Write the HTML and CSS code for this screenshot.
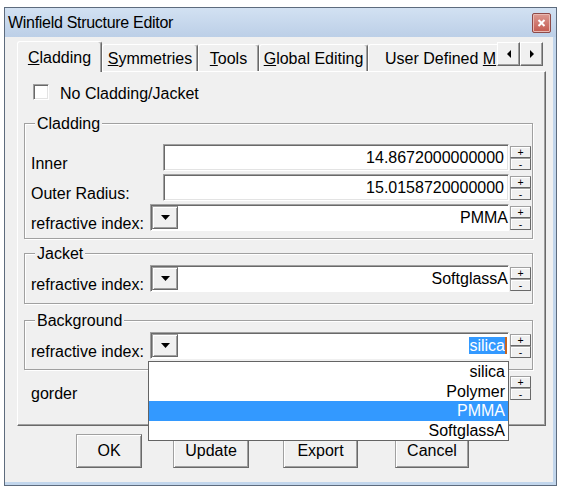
FILE: index.html
```html
<!DOCTYPE html>
<html>
<head>
<meta charset="utf-8">
<title>Winfield Structure Editor</title>
<link rel="stylesheet" href="styles.css">
</head>
<body>
<div class="window">
  <div class="titlebar">
    <span class="title">Winfield Structure Editor</span>
    <span class="close"><svg width="9" height="8" viewBox="0 0 9 8"><path d="M1.5 1 L7.5 7 M7.5 1 L1.5 7" stroke="#fff" stroke-width="2" fill="none"/></svg></span>
  </div>
  <div class="client">
    <div class="tabstrip">
      <div class="tab sel t-clad"><u>C</u>ladding</div>
      <div class="tab t-sym"><u>S</u>ymmetries</div>
      <div class="tab t-tools"><u>T</u>ools</div>
      <div class="tab t-glob"><u>G</u>lobal Editing</div>
      <div class="tab t-user">User Defined <u>M</u></div>
      <div class="scroll">
        <div class="sbtn"><svg width="4" height="8" viewBox="0 0 4 8"><polygon points="4,0 4,8 0,4" fill="#000"/></svg></div>
        <div class="sbtn"><svg width="4" height="8" viewBox="0 0 4 8"><polygon points="0,0 0,8 4,4" fill="#000"/></svg></div>
      </div>
    </div>
    <div class="panel">
      <div class="chkrow">
        <span class="checkbox"></span>
        <span class="chklbl">No Cladding/Jacket</span>
      </div>

      <div class="group g-clad">
        <div class="gtitle">Cladding</div>
        <div class="rows">
          <div class="row">
            <div class="lbl">Inner</div>
            <div class="field">14.8672000000000</div>
            <div class="spin"><div class="sp">+</div><div class="sp">-</div></div>
          </div>
          <div class="row">
            <div class="lbl">Outer Radius:</div>
            <div class="field">15.0158720000000</div>
            <div class="spin"><div class="sp">+</div><div class="sp">-</div></div>
          </div>
          <div class="row">
            <div class="lbl">refractive index:</div>
            <div class="combo">
              <div class="ddbtn"><svg width="9" height="5" viewBox="0 0 9 5"><polygon points="0,0 9,0 4.5,5" fill="#000"/></svg></div>
              <div class="ctext">PMMA</div>
            </div>
            <div class="spin"><div class="sp">+</div><div class="sp">-</div></div>
          </div>
        </div>
      </div>

      <div class="group g-jack">
        <div class="gtitle">Jacket</div>
        <div class="rows">
          <div class="row">
            <div class="lbl">refractive index:</div>
            <div class="combo">
              <div class="ddbtn"><svg width="9" height="5" viewBox="0 0 9 5"><polygon points="0,0 9,0 4.5,5" fill="#000"/></svg></div>
              <div class="ctext">SoftglassA</div>
            </div>
            <div class="spin"><div class="sp">+</div><div class="sp">-</div></div>
          </div>
        </div>
      </div>

      <div class="group g-back">
        <div class="gtitle">Background</div>
        <div class="rows">
          <div class="row">
            <div class="lbl">refractive index:</div>
            <div class="combo open">
              <div class="ddbtn"><svg width="9" height="5" viewBox="0 0 9 5"><polygon points="0,0 9,0 4.5,5" fill="#000"/></svg></div>
              <div class="ctext"><span class="seltext">silica</span><span class="caret"></span></div>
              <div class="ddlist">
                <div class="item">silica</div>
                <div class="item">Polymer</div>
                <div class="item hi">PMMA</div>
                <div class="item">SoftglassA</div>
              </div>
            </div>
            <div class="spin"><div class="sp">+</div><div class="sp">-</div></div>
          </div>
        </div>
      </div>

      <div class="row gorder">
        <div class="lbl">gorder</div>
        <div class="field"></div>
        <div class="spin"><div class="sp">+</div><div class="sp">-</div></div>
      </div>
    </div>
    <div class="btnrow">
      <div class="btn b-ok">OK</div>
      <div class="btn b-upd">Update</div>
      <div class="btn b-exp">Export</div>
      <div class="btn b-can">Cancel</div>
    </div>
  </div>
</div>
</body>
</html>
```
FILE: styles.css
```css
* { box-sizing: border-box; }
html, body { margin: 0; padding: 0; background: #fff; }
body {
  font-family: "Liberation Sans", Arial, sans-serif;
  font-size: 16px;
  line-height: 18px;
  color: #000;
}

/* window frame */
.window {
  margin: 7px 0 0 4px;
  width: 553px;
  height: 479px;
  border: 1px solid #5d6b7d;
  background: #c2d6ec;
  display: flex;
  flex-direction: column;
}
.titlebar {
  flex: none;
  height: 29px;
  display: flex;
  align-items: center;
  padding: 0 5px 0 3px;
  background: linear-gradient(#d2e1f2, #bccfe7);
}
.title {
  font-size: 16px;
  letter-spacing: -0.3px;
  line-height: 20px;
}
.close {
  margin-left: auto;
  width: 19px;
  height: 20px;
  border: 1px solid #8e4a48;
  border-radius: 2px;
  background: linear-gradient(#dc9a92, #c45a4f);
  box-shadow: inset 0 0 0 1px #e9b9b2;
  display: flex;
  align-items: center;
  justify-content: center;
}
.client {
  flex: 1;
  margin: 0 3px 3px 0;
  background: #f0f0f0;
  display: flex;
  flex-direction: column;
}

/* tabs */
.tabstrip {
  flex: none;
  height: 34px;
  display: flex;
  align-items: flex-end;
  padding: 0 10px 0 12px;
}
.tab {
  flex: none;
  height: 27px;
  padding-top: 5px;
  text-align: center;
  white-space: nowrap;
  background: #f0f0f0;
  border-top: 1px solid #fff;
  border-left: 1px solid #fff;
  border-right: 1px solid #696969;
  box-shadow: inset -1px 0 #a0a0a0;
  border-radius: 3px 3px 0 0;
}
.tab.sel {
  height: 31px;
  padding-top: 7px;
  margin-bottom: -1px;
  position: relative;
  z-index: 1;
}
.t-clad { width: 85px; }
.t-sym { width: 96px; }
.t-tools { width: 61px; }
.t-glob { width: 109px; }
.t-user {
  flex: 1;
  min-width: 0;
  text-align: left;
  padding-left: 16px;
  border-right: none;
  box-shadow: none;
  border-radius: 3px 0 0 0;
}
.scroll {
  flex: none;
  align-self: flex-start;
  margin-top: 5px;
  display: flex;
}
.sbtn {
  width: 23px;
  height: 24px;
  display: flex;
  align-items: center;
  justify-content: center;
  background: #f0f0f0;
  border: 1px solid;
  border-color: #fff #696969 #696969 #fff;
  box-shadow: inset -1px -1px #a0a0a0;
}

/* panel */
.panel {
  flex: none;
  margin-left: 12px;
  width: 529px;
  height: 355px;
  border: 1px solid;
  border-color: #fff #696969 #696969 #fff;
  box-shadow: inset -1px -1px #a0a0a0;
}
.chkrow {
  margin: 12px 0 0 15px;
  height: 16px;
  display: flex;
  align-items: center;
}
.checkbox {
  width: 16px;
  height: 16px;
  background: #fff;
  border: 1px solid;
  border-color: #a0a0a0 #fff #fff #a0a0a0;
  box-shadow: inset 1px 1px #696969, inset -1px -1px #e3e3e3;
}
.chklbl { margin-left: 11px; padding-top: 3px; }

/* group boxes */
.group {
  margin-left: 6px;
  width: 509px;
  border: 1px solid #a0a0a0;
  box-shadow: 1px 1px #fff, inset 1px 1px #fff;
  padding: 0 1px 0 6px;
}
.gtitle {
  margin: -10px 0 0 4px;
  width: fit-content;
  height: 20px;
  line-height: 20px;
  padding: 0 2px;
  background: #f0f0f0;
}
.g-clad { margin-top: 23px; padding-bottom: 7px; }
.g-clad .rows { margin-top: 10px; }
.g-jack { margin-top: 14px; padding-bottom: 11px; }
.g-jack .rows { margin-top: 1px; }
.g-back { margin-top: 16px; padding-bottom: 10px; }
.g-back .rows { margin-top: 1px; }

.row {
  display: flex;
  height: 27px;
}
.row + .row { margin-top: 3px; }
.lbl {
  width: 119px;
  flex: none;
  padding-top: 11px;
  white-space: nowrap;
}
.field {
  width: 346px;
  margin-left: 13px;
  flex: none;
  background: #fff;
  border: 1px solid;
  border-color: #a0a0a0 #fff #fff #a0a0a0;
  box-shadow: inset 1px 1px #696969, inset -1px -1px #e3e3e3;
  text-align: right;
  padding-right: 4px;
  line-height: 25px;
}
.combo {
  width: 359px;
  flex: none;
  display: flex;
  position: relative;
  background: #fff;
  border: 1px solid;
  border-color: #a0a0a0 #fff #fff #a0a0a0;
  box-shadow: inset 1px 1px #696969;
  padding: 1px 0 1px 1px;
}
.ddbtn {
  width: 26px;
  flex: none;
  display: flex;
  align-items: center;
  justify-content: center;
  background: #f0f0f0;
  border: 1px solid;
  border-color: #a0a0a0 #696969 #696969 #a0a0a0;
  box-shadow: inset 1px 1px #fff, inset -1px -1px #a0a0a0;
}
.ctext {
  flex: 1;
  display: flex;
  align-items: center;
  justify-content: flex-end;
  white-space: nowrap;
}
.seltext {
  background: #3399ff;
  color: #fff;
  line-height: 17px;
}
.caret {
  width: 2px;
  height: 17px;
  background: #c8641e;
  margin-right: 1px;
}
.spin {
  width: 21px;
  margin-left: 1px;
  flex: none;
  display: flex;
  flex-direction: column;
  padding: 2px 0 1px;
}
.sp {
  flex: 1;
  display: flex;
  align-items: center;
  justify-content: center;
  font-size: 10.5px;
  line-height: 10px;
  background: #f0f0f0;
  border: 1px solid;
  border-color: #a0a0a0 #696969 #696969 #a0a0a0;
  box-shadow: inset 1px 1px #fff;
}
.gorder { margin: 4px 0 0 13px; }

/* dropdown list */
.ddlist {
  position: absolute;
  left: -3px;
  top: 28px;
  width: 361px;
  z-index: 10;
  background: #fff;
  border: 1px solid #646464;
}
.item {
  height: 19.5px;
  line-height: 19.5px;
  text-align: right;
  padding-right: 3px;
}
.item.hi { background: #3399ff; color: #fff; }

/* buttons */
.btnrow {
  flex: none;
  display: flex;
  height: 34px;
  margin-top: 8px;
}
.btn {
  height: 34px;
  display: flex;
  align-items: center;
  justify-content: center;
  background: #f0f0f0;
  border: 1px solid;
  border-color: #a0a0a0 #696969 #696969 #a0a0a0;
  box-shadow: inset 1px 1px #fff, inset -1px -1px #a0a0a0;
}
.b-ok { width: 66px; margin-left: 71px; }
.b-upd { width: 76px; margin-left: 31px; }
.b-exp { width: 75px; margin-left: 34px; }
.b-can { width: 74px; margin-left: 37px; }
```
